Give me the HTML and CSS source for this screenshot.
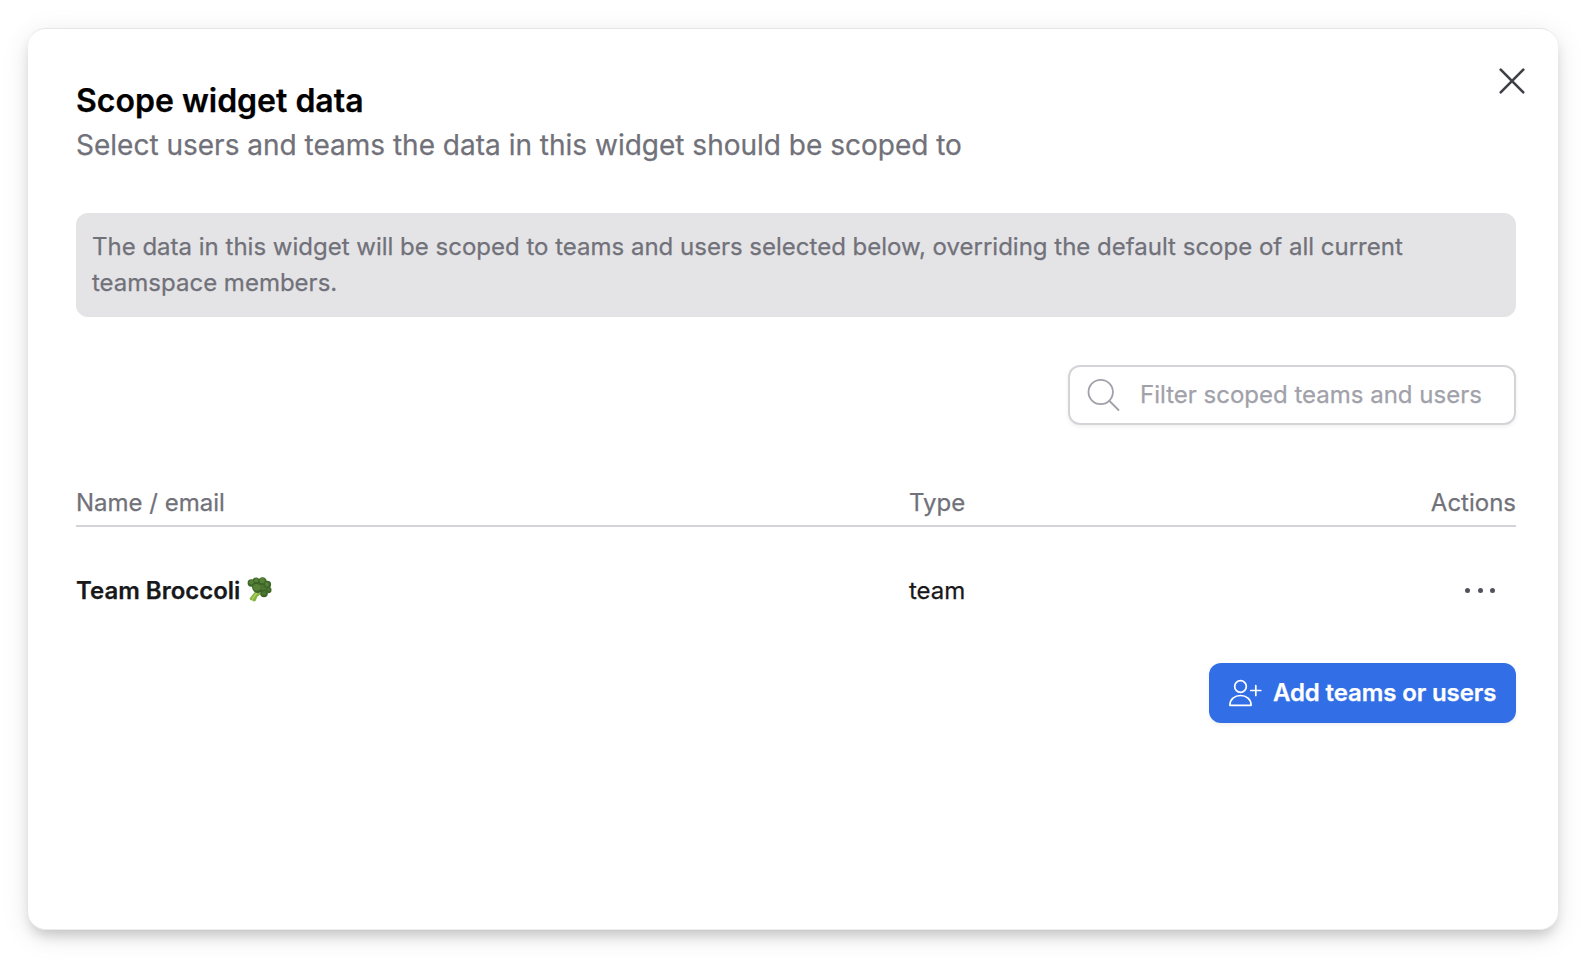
FILE: index.html
```html
<!DOCTYPE html>
<html lang="en">
<head>
<meta charset="utf-8">
<title>Scope widget data</title>
<link rel="stylesheet" href="styles.css">
</head>
<body>
<main class="dialog">
  <header class="header">
    <div>
      <h1 class="title">Scope widget data</h1>
      <p class="subtitle">Select users and teams the data in this widget should be scoped to</p>
    </div>
    <button class="close" aria-label="Close">
      <svg width="26" height="26" viewBox="0 0 26 26" fill="none" stroke="currentColor" stroke-width="2.6" stroke-linecap="round"><path d="M1.7 1.7 24.3 24.3M24.3 1.7 1.7 24.3"/></svg>
    </button>
  </header>
  <p class="notice">The data in this widget will be scoped to teams and users selected below, overriding the default scope of all current teamspace members.</p>
  <div class="toolbar">
    <label class="search">
      <svg width="34" height="34" viewBox="0 0 34 34" fill="none" stroke="currentColor" stroke-width="1.8" stroke-linecap="round"><circle cx="14.7" cy="14" r="12.2"/><path d="M23.500 23 32.500 32"/></svg>
      <span class="placeholder">Filter scoped teams and users</span>
    </label>
  </div>
  <div class="row head">
    <span>Name / email</span><span>Type</span><span class="end">Actions</span>
  </div>
  <div class="row item">
    <span class="name"><span class="team">Team Broccoli</span>
      <svg class="broccoli" width="25" height="25" viewBox="0 0 25 25">
        <path d="M2.5 21.5 9.5 13 14 17 10.5 19.5 8.500 24Q6.500 25 5.500 23.400 3 23.600 2.500 21.500Z" fill="#87b33f"/>
        <path d="M5 22.500 10 15.500" stroke="#b0cf62" stroke-width="1.400"/>
        <g fill="#3d6628"><circle cx="4.300" cy="6" r="3.700"/><circle cx="9" cy="4" r="3.500"/><circle cx="15.500" cy="4.400" r="4.200"/><circle cx="20.400" cy="7.500" r="3.700"/><circle cx="21.300" cy="13" r="3.200"/><circle cx="17" cy="16.500" r="3.800"/><circle cx="11" cy="10" r="6"/><circle cx="16" cy="10" r="5.500"/></g>
        <g fill="#568238"><circle cx="4.400" cy="5.300" r="2.300"/><circle cx="9.200" cy="3.200" r="2"/><circle cx="15.300" cy="3.400" r="2.600"/><circle cx="10" cy="10" r="3.800"/><circle cx="19.800" cy="7.400" r="2.100"/></g>
        <g fill="#4b7530"><circle cx="16.500" cy="11" r="3"/><circle cx="17" cy="16" r="2.200"/><circle cx="21.600" cy="12.600" r="1.700"/></g>
        <path d="M7 7Q9.800 5.400 12.700 7.600M13.400 13.500Q15.300 15 18 13.300M16.800 7Q18.400 8.600 18.400 10.600" fill="none" stroke="#315522" stroke-width=".8"/>
      </svg>
    </span>
    <span class="type">team</span>
    <button class="more" aria-label="More actions"><i></i><i></i><i></i></button>
  </div>
  <div class="footer">
    <button class="add">
      <svg width="34" height="28" viewBox="0 0 34 28" fill="none" stroke="currentColor" stroke-width="1.7" stroke-linecap="round" stroke-linejoin="round"><circle cx="11.500" cy="7.500" r="5.800"/><path d="M.9 26.300C.9 20.300 5.600 16.500 11.500 16.500S22.100 20.300 22.100 26.300ZM26.800 6.500V16.500M21.800 11.500H31.800"/></svg>
      <span class="add-text">Add teams or users</span>
    </button>
  </div>
</main>
</body>
</html>
```
FILE: styles.css
```css
* { box-sizing: border-box; }
body { margin: 0; height: 958px; overflow: hidden; padding: 28px; background: #fff; font-family: Inter, sans-serif; font-size: 24px; color: #71717a; -webkit-text-stroke: .25px currentColor; }
h1, p { margin: 0; }
button { border: 0; padding: 0; background: none; font: inherit; }
svg { display: block; flex: none; }
.dialog { width: 1530px; height: 902px; padding: 48px 42px 0 48px; border-top: 1px solid #e6e6e6; border-bottom: 1px solid #ececec; border-radius: 18px; background: #fff; box-shadow: 0 8px 14px -4px rgba(0,0,0,.2), 0 6px 28px rgba(0,0,0,.1); }
.header { display: flex; justify-content: space-between; height: 136px; }
.title { font-size: 32px; line-height: 48px; font-weight: 600; color: #000; }
.subtitle { font-size: 28px; line-height: 40px; }
.close { color: #3f3f46; width: 42px; padding: 0 8px; height: 60px; display: flex; align-items: flex-start; margin-top: -9px; margin-right: -17px; }
.notice, .toolbar, .row, .footer { width: 1440px; }
.notice { height: 104px; padding: 16px; line-height: 36px; border-radius: 12px; background: #e4e4e6; }
.toolbar { margin-top: 48px; display: flex; justify-content: flex-end; }
.search { width: 448px; height: 60px; padding: 0 16px; display: flex; align-items: center; gap: 20px; border: 2px solid #d4d4d8; border-radius: 12px; box-shadow: 0 2px 4px rgba(0,0,0,.06); color: #a1a1aa; }
.placeholder { padding-bottom: 2px; }
.row { display: grid; grid-template-columns: 833px 1fr 120px; align-items: center; }
.head { margin-top: 60px; height: 42px; padding-bottom: 4px; border-bottom: 2px solid #d4d4d8; line-height: 34px; }
.end { text-align: right; }
.item { height: 60px; margin-top: 33px; color: #18181b; }
.name { display: flex; align-items: center; gap: 7px; font-weight: 600; }
.broccoli { margin-top: -2px; }
.more { display: flex; justify-content: flex-end; gap: 7.5px; padding-right: 21px; }
.more i { width: 5px; height: 5px; border-radius: 50%; background: #52525b; }
.footer { margin-top: 43px; display: flex; justify-content: flex-end; }
.add { width: 307px; height: 60px; padding: 0 20px; display: flex; align-items: center; gap: 10px; border-radius: 12px; background: #326fe6; color: #fff; font-weight: 600; box-shadow: 0 2px 4px rgba(0,0,0,.06); white-space: nowrap; }
.add-text { padding-bottom: 2px; letter-spacing: -.12px; }
```
